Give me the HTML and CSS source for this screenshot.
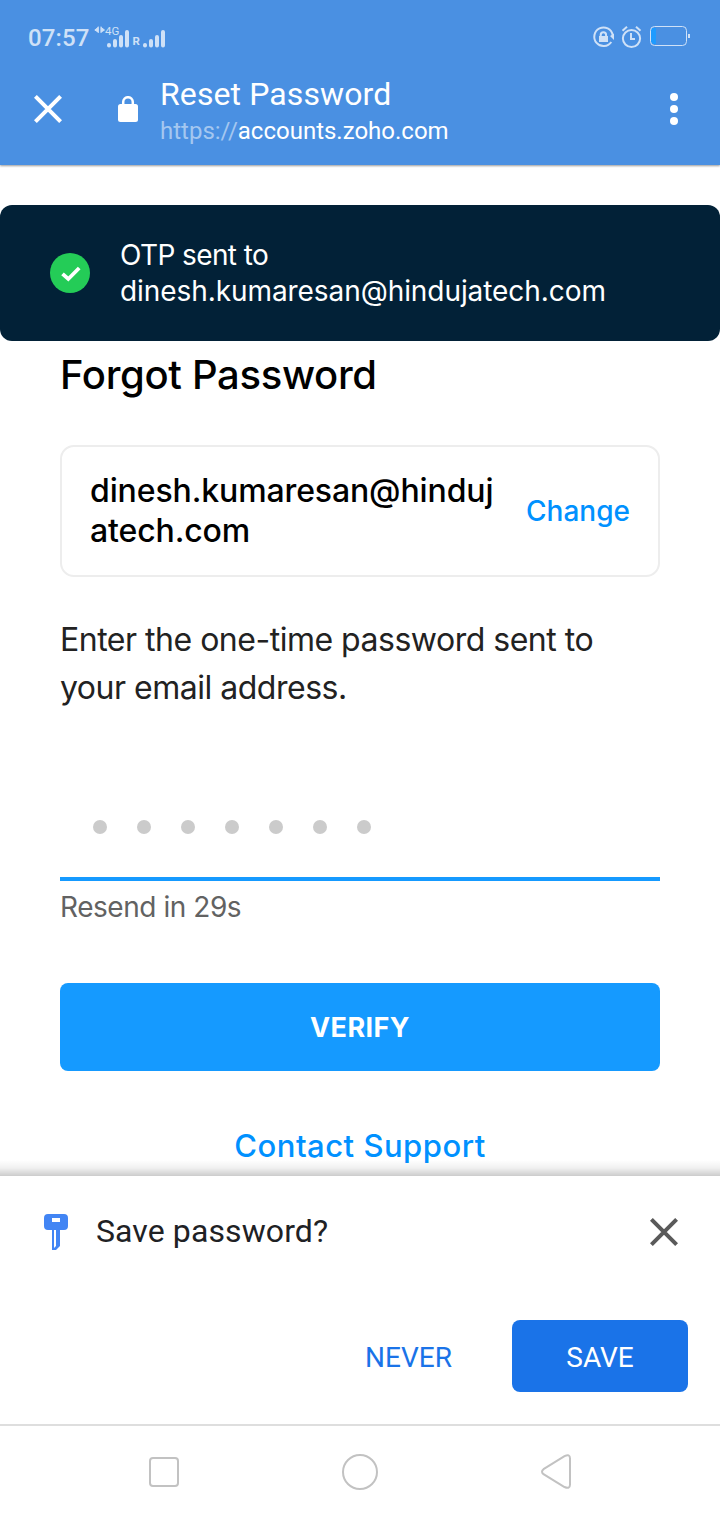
FILE: index.html
```html
<!DOCTYPE html>
<html lang="en">
<head>
<meta charset="utf-8">
<title>Reset Password</title>
<link rel="stylesheet" href="styles.css">
</head>
<body>
<div class="phone">
  <header class="top">
    <div class="status">
      <span class="time">07:57</span>
      <svg class="signals" width="74" height="28" viewBox="0 0 74 28">
        <path d="M4.300 2.500v6.500M.8 6l3.200-2.500v4.500zM7 2.500v6.500M10.500 6L7.300 3.500v4.500z" class="data"/>
        <text x="11" y="11.300" class="net">4G</text>
        <path d="M15 21v.5M21 17v4.500M27 13v8.500M33 8v13.500" class="bars"/>
        <text x="38.500" y="21" class="roam">R</text>
        <path d="M51 21v.5M57 17v4.500M63 13v8.500M69 8v13.500" class="bars"/>
      </svg>
      <svg class="device" width="100" height="28" viewBox="0 0 100 28">
        <g class="line">
          <path d="M21.300 18A9.300 9.300 0 1 1 22.700 11"/>
          <path d="M10.700 13v-2a2.700 2.700 0 0 1 5.400 0V13" class="shackle"/>
          <circle cx="41.500" cy="14.500" r="8.600"/>
          <path d="M41 9v6h4M32.500 6.800l4.500-4M50.500 6.800l-4.500-4"/>
        </g>
        <path d="M9 12h9v6H9zM20 12l4-2.500v6.500z" class="solid"/>
        <path d="M62 4h4v16h-3l-2-2V6z" class="charge"/>
        <rect x="60.500" y="2.500" width="36" height="19" rx="4" class="cell"/>
        <path d="M98 10h2v4h-2z" class="solid"/>
      </svg>
    </div>
    <div class="toolbar">
      <svg class="close" width="28" height="28" viewBox="0 0 28 28"><path d="M1.400 1.400l25.200 25.200M26.600 1.400L1.400 26.600"/></svg>
      <svg class="lock" width="20" height="26" viewBox="0 0 20 26"><path d="M5.200 9V6a4.800 4.800 0 0 1 9.600 0v3" class="lock-arc"/><rect y="8" width="20" height="18" rx="2.500"/></svg>
      <div class="page-info">
        <div class="page-title">Reset Password</div>
        <div class="url"><span class="scheme">https://</span>accounts.zoho.com</div>
      </div>
      <svg class="more" width="8" height="32" viewBox="0 0 8 32"><circle cx="4" cy="4" r="4"/><circle cx="4" cy="16" r="4"/><circle cx="4" cy="28" r="4"/></svg>
    </div>
  </header>

  <div class="toast">
    <svg width="40" height="40" viewBox="0 0 40 40"><circle cx="20" cy="20" r="20" class="badge"/><path d="M12.500 20.800l5.800 5.200L29.200 15" class="tick"/></svg>
    <p class="toast-text"><span class="toast-a">OTP sent to</span><br><span class="toast-b">dinesh.kumaresan@hindujatech.com</span></p>
  </div>

  <main class="form">
    <h1 class="heading">Forgot Password</h1>
    <div class="account">
      <div class="email">dinesh.kumaresan@hinduj<br>atech.com</div>
      <a class="change">Change</a>
    </div>
    <p class="hint">Enter the one-time password sent to<br>your email address.</p>
    <div class="otp"><i></i><i></i><i></i><i></i><i></i><i></i><i></i></div>
    <div class="resend">Resend in 29s</div>
    <div class="verify">VERIFY</div>
    <div class="support">Contact Support</div>
  </main>

  <section class="sheet">
    <div class="sheet-head">
      <svg class="key" width="24" height="36" viewBox="0 0 24 36"><path fill-rule="evenodd" d="M4 0h16a4 4 0 0 1 4 4v8a4 4 0 0 1-4 4h-4v16l-4 4H8V16H4a4 4 0 0 1-4-4V4a4 4 0 0 1 4-4zM8 4v4h8V4zM10 16v18l2-2V16z"/></svg>
      <span class="question">Save password?</span>
      <svg class="dismiss" width="28" height="28" viewBox="0 0 28 28"><path d="M1.400 1.400l25.200 25.200M26.600 1.400L1.400 26.600"/></svg>
    </div>
    <div class="actions">
      <span class="never">NEVER</span>
      <span class="save">SAVE</span>
    </div>
  </section>

  <nav class="nav">
    <svg width="40" height="40" viewBox="0 0 40 40"><rect x="6" y="6" width="28" height="28" rx="3"/></svg>
    <svg width="40" height="40" viewBox="0 0 40 40"><circle cx="20" cy="20" r="17"/></svg>
    <svg width="40" height="40" viewBox="0 0 40 40"><path d="M7.500 17.200L28.500 4.200Q34 1.500 34 6.500V32.500Q34 37.500 28.500 35L7.500 22.200Q4.500 19.700 7.500 17.200z"/></svg>
  </nav>
</div>
</body>
</html>
```
FILE: styles.css
```css
* { box-sizing: border-box; }
body { margin: 0; background: #fff; }
p, h1 { margin: 0; }
svg { display: block; flex: none; }
.phone { width: 720px; height: 1520px; overflow: hidden; display: flex; flex-direction: column; font-family: Inter, sans-serif; white-space: nowrap; }

.top { height: 165px; flex: none; background: #4a90e2; color: #fff; font-family: Roboto, sans-serif; box-shadow: 0 1px 2px rgba(0,0,0,.4); }
.status { height: 72px; display: flex; align-items: flex-start; padding: 24px 30px 0 28px; color: #cfe1f7; }
.time { width: 65px; font-size: 24px; line-height: 28px; font-weight: 500; letter-spacing: .1px; }
.signals { margin: 0 auto 0 1px; }
.data { fill: #cfe1f7; stroke: #cfe1f7; stroke-width: 1; }
.net { font-size: 11.500px; fill: #cfe1f7; }
.roam { font-size: 11.500px; font-weight: 700; fill: #cfe1f7; }
.bars { stroke: #cfe1f7; stroke-width: 4; stroke-linecap: round; fill: none; }
.line { fill: none; stroke: #cfe1f7; stroke-width: 2; }
.solid { fill: #cfe1f7; }
.charge { fill: #1e9bff; }
.cell { fill: none; stroke: #cfe1f7; stroke-width: 1; }

.toolbar { display: flex; align-items: center; height: 74px; padding: 0 42px 0 34px; }
.close { stroke: #fff; stroke-width: 4; }
.lock { margin-left: 56px; fill: #fff; }
.lock-arc { fill: none; stroke: #fff; stroke-width: 2.500px; }
.page-info { flex: 1; margin-left: 22px; }
.page-title { font-size: 32px; line-height: 38px; letter-spacing: .1px; padding-top: 3px; }
.url { font-size: 24px; line-height: 30px; padding-top: 3px; height: 33px; }
.scheme { color: #a4c7f0; }
.more { fill: #fff; }

.toast { margin-top: 40px; height: 136px; flex: none; background: #022137; border-radius: 12px; display: flex; align-items: center; padding-left: 50px; gap: 30px; color: #fff; }
.badge { fill: #24cc57; }
.tick { fill: none; stroke: #fff; stroke-width: 3.800; }
.toast-text { font-size: 28px; line-height: 36px; }
.toast-a { letter-spacing: -.6px; }
.toast-b { letter-spacing: -.07px; }

.form { padding: 8px 60px 0; height: 835px; flex: none; overflow: hidden; }
.heading { font-size: 40px; line-height: 52px; font-weight: 500; letter-spacing: -.33px; color: #000; }
.account { margin-top: 44px; height: 132px; border: 2px solid #ededed; border-radius: 14px; display: flex; justify-content: space-between; align-items: center; padding: 0 28px; }
.email { font-size: 32px; line-height: 40px; font-weight: 500; letter-spacing: -.12px; color: #000; }
.change { font-size: 28px; font-weight: 500; color: #0091ff; }
.hint { margin-top: 39px; font-size: 32px; line-height: 48px; letter-spacing: -.49px; color: #222; }
.otp { margin-top: 65px; height: 104px; border-bottom: 4px solid #159aff; display: flex; gap: 30px; padding: 43px 0 0 32.600px; }
.otp i { width: 14px; height: 14px; border-radius: 50%; background: #cbcbcb; }
.resend { margin-top: 9px; height: 34px; font-size: 28px; line-height: 34px; letter-spacing: -.45px; color: #626262; }
.verify { margin-top: 59px; height: 88px; border-radius: 8px; background: #159aff; color: #fff; display: flex; align-items: center; justify-content: center; font-size: 27px; font-weight: 700; letter-spacing: .4px; }
.support { margin-top: 55px; text-align: center; font-size: 31px; line-height: 40px; font-weight: 500; letter-spacing: .5px; color: #0091ff; }

.sheet { position: relative; height: 248px; flex: none; background: #fff; font-family: Roboto, sans-serif; }
.sheet::before { content: ""; position: absolute; left: 0; right: 0; top: -16px; height: 16px; background: linear-gradient(rgba(0,0,0,0), rgba(0,0,0,.06) 50%, rgba(0,0,0,.2)); }
.sheet-head { display: flex; align-items: center; height: 112px; padding: 0 42px 0 44px; }
.key { fill: #4285f4; }
.question { flex: 1; margin: -2px 0 0 28px; font-size: 32px; letter-spacing: .1px; color: #202124; }
.dismiss { stroke: #5a5a5a; stroke-width: 4; }
.actions { display: flex; justify-content: flex-end; align-items: center; padding: 32px 32px 0 0; gap: 60px; font-size: 28px; }
.never { padding-top: 2px; color: #1a73e8; }
.save { width: 176px; height: 72px; line-height: 76px; border-radius: 8px; background: #1a73e8; color: #fff; text-align: center; }

.nav { position: relative; flex: 1; background: #fff; border-top: 2px solid #dedede; display: flex; justify-content: space-between; align-items: center; padding: 0 144px 2px; }
.nav svg { fill: none; stroke: #c2c2c2; stroke-width: 2; }
```
